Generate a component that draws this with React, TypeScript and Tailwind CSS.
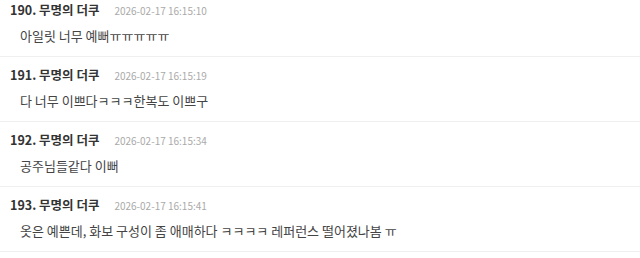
const comments = [
  { no: 190, name: '무명의 더쿠', date: '2026-02-17 16:15:10', text: '아일릿 너무 예뻐ㅠㅠㅠㅠㅠ' },
  { no: 191, name: '무명의 더쿠', date: '2026-02-17 16:15:19', text: '다 너무 이쁘다ㅋㅋㅋ한복도 이쁘구' },
  { no: 192, name: '무명의 더쿠', date: '2026-02-17 16:15:34', text: '공주님들같다 이뻐' },
  { no: 193, name: '무명의 더쿠', date: '2026-02-17 16:15:41', text: '옷은 예쁜데, 화보 구성이 좀 애매하다 ㅋㅋㅋㅋ 레퍼런스 떨어졌나봄 ㅠ' },
];

export default function App() {
  return (
    <div
      className="w-[640px] h-[258px] overflow-hidden bg-white"
      style={{ fontFamily: '"Noto Sans CJK KR", "Noto Sans", sans-serif' }}
    >
      <ul className="-mt-[8px]">
        {comments.map((c) => (
          <li key={c.no} className="border-b border-[#efefef] pt-[9px] pb-[10px]">
            <div className="flex items-center h-[18px] pl-[10px]">
              <span className="text-[12.5px] font-bold text-[#333]">
                {c.no}. {c.name}
              </span>
              <span className="ml-[15px] text-[10px] text-[#aaa]">{c.date}</span>
            </div>
            <p className="mt-[7px] h-[20px] leading-[20px] pl-[20px] text-[13px] text-[#444]">{c.text}</p>
          </li>
        ))}
      </ul>
    </div>
  );
}
